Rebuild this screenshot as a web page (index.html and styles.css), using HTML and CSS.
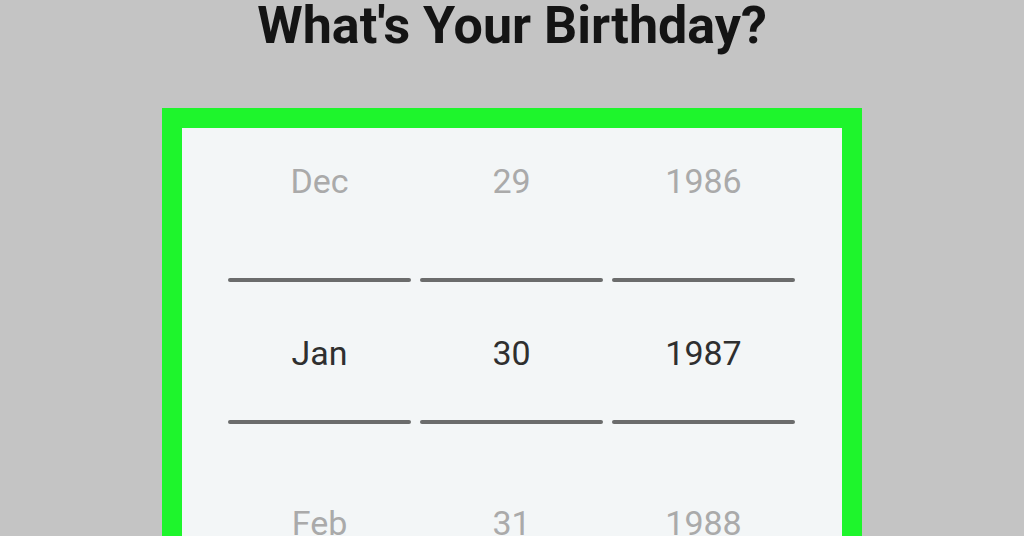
FILE: index.html
```html
<!DOCTYPE html>
<html>
<head>
<meta charset="utf-8">
<link rel="stylesheet" href="styles.css">
</head>
<body>
<div class="page">
  <h1 class="title">What's Your Birthday?</h1>
  <div class="frame">
    <div class="panel">
      <div class="wheel">
        <div class="cell cell-top faded">Dec</div>
        <div class="rule"></div>
        <div class="cell cell-mid">Jan</div>
        <div class="rule"></div>
        <div class="cell cell-bot faded">Feb</div>
      </div>
      <div class="wheel">
        <div class="cell cell-top faded">29</div>
        <div class="rule"></div>
        <div class="cell cell-mid">30</div>
        <div class="rule"></div>
        <div class="cell cell-bot faded">31</div>
      </div>
      <div class="wheel">
        <div class="cell cell-top faded">1986</div>
        <div class="rule"></div>
        <div class="cell cell-mid">1987</div>
        <div class="rule"></div>
        <div class="cell cell-bot faded">1988</div>
      </div>
    </div>
  </div>
</div>
</body>
</html>
```

FILE: styles.css
```css
html, body {
  margin: 0;
  padding: 0;
  height: 100%;
  overflow: hidden;
}
body {
  background: #c4c4c4;
  font-family: Roboto, "Liberation Sans", sans-serif;
}
.page {
  display: flex;
  flex-direction: column;
  align-items: center;
}
.title {
  margin: 0;
  height: 108px;
  box-sizing: border-box;
  font-size: 52px;
  font-weight: 700;
  color: #141414;
  line-height: 52px;
}
.frame {
  width: 700px;
  box-sizing: border-box;
  border: 20px solid #1ef52c;
  border-bottom: none;
  height: 428px;
}
.panel {
  background: #f3f6f7;
  height: 100%;
  box-sizing: border-box;
  padding: 0 47px 0 46px;
  display: grid;
  grid-template-columns: repeat(3, 183px);
  column-gap: 9px;
}
.wheel {
  display: flex;
  flex-direction: column;
}
.cell {
  display: flex;
  align-items: center;
  justify-content: center;
  font-size: 34px;
  color: #2f2f2f;
}
.cell-top {
  height: 106px;
  margin-bottom: 44px;
}
.cell-mid {
  height: 138px;
  padding-top: 3px;
  box-sizing: border-box;
}
.cell-bot {
  margin-top: 44px;
  height: 110px;
}
.faded {
  color: #aaaaaa;
}
.rule {
  height: 4px;
  background: #6b6c6c;
  border-radius: 2px;
}
```
